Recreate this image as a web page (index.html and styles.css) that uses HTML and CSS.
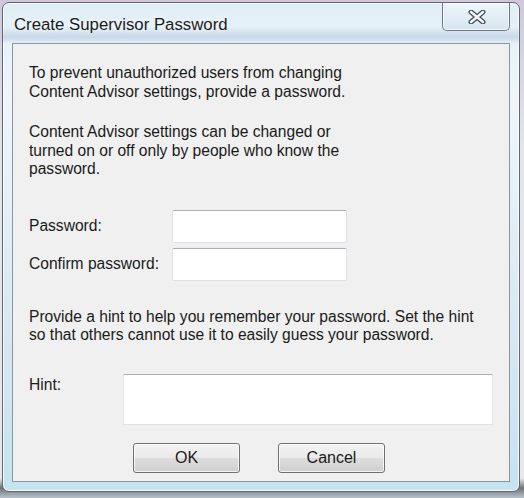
FILE: index.html
```html
<!DOCTYPE html>
<html lang="en">
<head>
    <meta charset="UTF-8">
    <title>Create Supervisor Password</title>
    <link rel="stylesheet" href="styles.css">
</head>
<body>
    <div class="window">
        <div class="titlebar">
            <span class="title">Create Supervisor Password</span>
            <button class="close-button" aria-label="Close">
                <svg width="18" height="14" viewBox="0 0 18 14">
                    <path d="M3 2 L15 12 M15 2 L3 12" stroke="#4a515b" stroke-width="5" stroke-linecap="round"/>
                    <path d="M3 2 L15 12 M15 2 L3 12" stroke="#f4f6f8" stroke-width="2.4" stroke-linecap="round"/>
                </svg>
            </button>
        </div>

        <div class="panel">
            <p class="intro">To prevent unauthorized users from changing<br>Content Advisor settings, provide a password.</p>
            <p class="note">Content Advisor settings can be changed or<br>turned on or off only by people who know the<br>password.</p>

            <div class="field-row first-row">
                <label class="field-label" for="password">Password:</label>
                <input type="password" id="password" class="text-input">
            </div>
            <div class="field-row">
                <label class="field-label" for="confirm">Confirm password:</label>
                <input type="password" id="confirm" class="text-input">
            </div>

            <p class="hint-text">Provide a hint to help you remember your password. Set the hint<br>so that others cannot use it to easily guess your password.</p>

            <div class="hint-row">
                <label class="hint-label" for="hint">Hint:</label>
                <textarea id="hint" class="hint-input"></textarea>
            </div>

            <div class="buttons">
                <button class="dialog-button">OK</button>
                <button class="dialog-button">Cancel</button>
            </div>
        </div>
    </div>
</body>
</html>
```

FILE: styles.css
```css
* {
    margin: 0;
    padding: 0;
    box-sizing: border-box;
}

body {
    font-family: "Liberation Sans", Arial, sans-serif;
    background: linear-gradient(180deg, #cfc8dd 0%, #e4e4ea 30%, #e8e8ec 96%, #6f737a 98%, #b9c3cc 100%);
    height: 498px;
    overflow: hidden;
}

.window {
    margin: 2px 0 0 2px;
    width: 518px;
    height: 490px;
    border: 1px solid #5f6771;
    border-radius: 7px;
    padding: 0 9px 9px 9px;
    display: flex;
    flex-direction: column;
    background: linear-gradient(180deg, #e2eef6 0%, #eef6fb 20%, #d7e6f1 70%, #c4e4ee 100%);
    box-shadow: inset 0 0 0 1px rgba(255, 255, 255, 0.8);
}

.titlebar {
    height: 40px;
    display: flex;
    justify-content: space-between;
    align-items: flex-start;
    background: linear-gradient(180deg, rgba(255, 255, 255, 0) 0%, rgba(255, 255, 255, 0) 60%, rgba(160, 185, 210, 0.45) 85%, rgba(220, 232, 242, 0.3) 100%);
    margin: 0 -9px;
    padding: 0 9px;
}

.title {
    font-size: 16.8px;
    color: #1b1b1b;
    padding: 12px 0 0 2px;
    text-shadow: 0 0 6px rgba(255, 255, 255, 0.9);
}

.close-button {
    width: 68px;
    height: 28px;
    border: 1px solid #6c7886;
    border-top: none;
    border-radius: 0 0 5px 5px;
    background: linear-gradient(180deg, #eef5fa 0%, #e3eef6 50%, #d4e4f0 100%);
    box-shadow: inset 0 0 0 1px rgba(255, 255, 255, 0.7);
    display: flex;
    align-items: center;
    justify-content: center;
    padding-left: 2px;
}

.panel {
    flex: 1;
    background: #f0f0f0;
    border: 1px solid #8a96a3;
    padding: 20px 16px 0 16px;
    font-size: 15.6px;
    line-height: 18.5px;
    color: #1a1a1a;
}

.note {
    margin-top: 22px;
}

.field-row {
    display: flex;
    align-items: center;
    margin-top: 5px;
}

.first-row {
    margin-top: 31px;
}

.field-label {
    width: 143px;
}

.text-input {
    width: 175px;
    height: 33px;
    border: 1px solid #dde1e6;
    border-top-color: #acaeb4;
    border-radius: 2px;
    background: #ffffff;
}

.hint-text {
    margin-top: 27px;
}

.hint-row {
    display: flex;
    align-items: flex-start;
    margin-top: 29px;
}

.hint-label {
    width: 95px;
    padding-top: 2px;
}

.hint-input {
    width: 373px;
    height: 51px;
    border: 1px solid #dde1e6;
    border-top-color: #acaeb4;
    background: #ffffff;
    resize: none;
}

.buttons {
    display: flex;
    justify-content: center;
    gap: 38px;
    margin-top: 18px;
    padding-right: 4px;
}

.dialog-button {
    width: 107px;
    height: 30px;
    border: 1px solid #707070;
    border-radius: 3px;
    background: linear-gradient(180deg, #f2f2f2 0%, #ebebeb 48%, #dddddd 52%, #cfcfcf 100%);
    box-shadow: inset 0 0 0 1px rgba(255, 255, 255, 0.75);
    font-family: "Liberation Sans", Arial, sans-serif;
    font-size: 16px;
    color: #1a1a1a;
}
```
